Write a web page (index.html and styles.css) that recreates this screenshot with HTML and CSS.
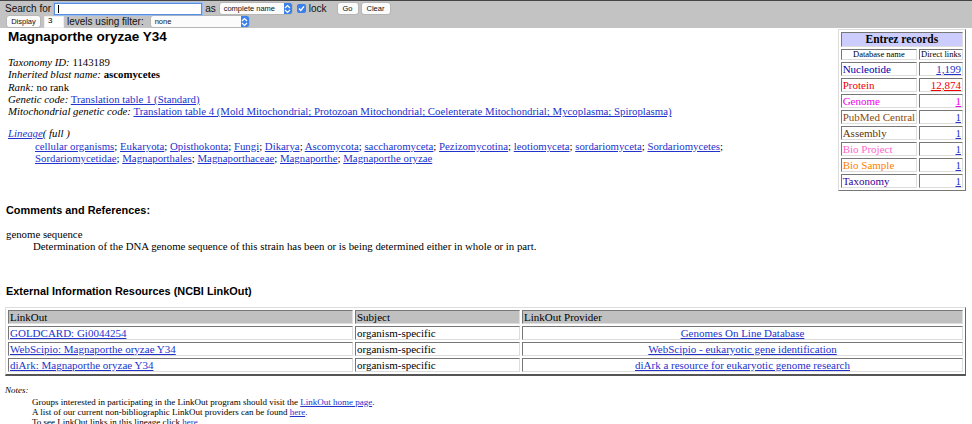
FILE: index.html
```html
<!DOCTYPE html>
<html>
<head>
<meta charset="utf-8">
<link rel="stylesheet" href="styles.css">
</head>
<body>
<div class="topbar">
  <div class="tb-row">
    <span class="tb-label">Search for</span>
    <span class="tb-input focus"><span class="caret"></span></span>
    <span class="tb-label">as</span>
    <span class="tb-select w1">complete name<span class="arrow"><svg width="7" height="10" viewBox="0 0 7 10"><path d="M1 4 L3.5 1.5 L6 4 M1 6 L3.5 8.5 L6 6" fill="none" stroke="#fff" stroke-width="1.2"/></svg></span></span>
    <span class="tb-check"><svg width="9" height="9" viewBox="0 0 9 9"><path d="M2 4.6 L3.8 6.5 L7 2.3" fill="none" stroke="#fff" stroke-width="1.4"/></svg></span>
    <span class="tb-label">lock</span>
    <span class="tb-btn go">Go</span>
    <span class="tb-btn">Clear</span>
  </div>
  <div class="tb-row">
    <span class="tb-btn disp">Display</span>
    <span class="tb-input small">3</span>
    <span class="tb-label">levels using filter:</span>
    <span class="tb-select w2">none<span class="arrow"><svg width="7" height="10" viewBox="0 0 7 10"><path d="M1 4 L3.5 1.5 L6 4 M1 6 L3.5 8.5 L6 6" fill="none" stroke="#fff" stroke-width="1.2"/></svg></span></span>
  </div>
</div>

<div class="upper">
  <div class="left">
    <h1 class="title">Magnaporthe oryzae Y34</h1>
    <div class="info">
      <div><i>Taxonomy ID:</i> 1143189</div>
      <div><i>Inherited blast name:</i> <b>ascomycetes</b></div>
      <div><i>Rank:</i> no rank</div>
      <div><i>Genetic code:</i> <a href="#">Translation table 1 (Standard)</a></div>
      <div><i>Mitochondrial genetic code:</i> <a href="#">Translation table 4 (Mold Mitochondrial; Protozoan Mitochondrial; Coelenterate Mitochondrial; Mycoplasma; Spiroplasma)</a></div>
    </div>
    <div class="lineage">
      <div><a href="#"><i>Lineage</i></a><i class="full">( full )</i></div>
      <div class="lin-links">
        <a href="#">cellular organisms</a>; <a href="#">Eukaryota</a>; <a href="#">Opisthokonta</a>; <a href="#">Fungi</a>; <a href="#">Dikarya</a>; <a href="#">Ascomycota</a>; <a href="#">saccharomyceta</a>; <a href="#">Pezizomycotina</a>; <a href="#">leotiomyceta</a>; <a href="#">sordariomyceta</a>; <a href="#">Sordariomycetes</a>;<br>
        <a href="#">Sordariomycetidae</a>; <a href="#">Magnaporthales</a>; <a href="#">Magnaporthaceae</a>; <a href="#">Magnaporthe</a>; <a href="#">Magnaporthe oryzae</a>
      </div>
    </div>
  </div>
  <table class="entrez">
    <tr><th colspan="2" class="ent-head">Entrez records</th></tr>
    <tr class="sub-row"><td class="sub">Database name</td><td class="sub">Direct links</td></tr>
    <tr><td class="c-nuc">Nucleotide</td><td class="num"><a href="#">1,199</a></td></tr>
    <tr><td class="c-pro">Protein</td><td class="num"><a href="#" class="red">12,874</a></td></tr>
    <tr><td class="c-gen">Genome</td><td class="num"><a href="#" class="mag">1</a></td></tr>
    <tr><td class="c-pmc">PubMed Central</td><td class="num"><a href="#">1</a></td></tr>
    <tr><td class="c-asm">Assembly</td><td class="num"><a href="#">1</a></td></tr>
    <tr><td class="c-bp">Bio Project</td><td class="num"><a href="#">1</a></td></tr>
    <tr><td class="c-bs">Bio Sample</td><td class="num"><a href="#">1</a></td></tr>
    <tr><td class="c-tax">Taxonomy</td><td class="num"><a href="#">1</a></td></tr>
  </table>
</div>

<h2 class="sect s1">Comments and References:</h2>
<div class="comments">
  <div>genome sequence</div>
  <div class="indent">Determination of the DNA genome sequence of this strain has been or is being determined either in whole or in part.</div>
</div>

<h2 class="sect s2">External Information Resources (NCBI LinkOut)</h2>
<table class="linkout">
  <tr class="lo-head"><td class="col1">LinkOut</td><td class="col2">Subject</td><td>LinkOut Provider</td></tr>
  <tr><td><a href="#">GOLDCARD: Gi0044254</a></td><td>organism-specific</td><td class="ctr"><a href="#">Genomes On Line Database</a></td></tr>
  <tr><td><a href="#">WebScipio: Magnaporthe oryzae Y34</a></td><td>organism-specific</td><td class="ctr"><a href="#">WebScipio - eukaryotic gene identification</a></td></tr>
  <tr><td><a href="#">diArk: Magnaporthe oryzae Y34</a></td><td>organism-specific</td><td class="ctr"><a href="#">diArk a resource for eukaryotic genome research</a></td></tr>
</table>

<div class="notes">
  <div class="notes-h"><i>Notes:</i></div>
  <div class="indent">Groups interested in participating in the LinkOut program should visit the <a href="#">LinkOut home page</a>.</div>
  <div class="indent">A list of our current non-bibliographic LinkOut providers can be found <a href="#">here</a>.</div>
  <div class="indent">To see LinkOut links in this lineage click <a href="#">here</a>.</div>
</div>
</body>
</html>
```

FILE: styles.css
```css
html, body {
  margin: 0;
  padding: 0;
  background: #fff;
}
body {
  font-family: "Liberation Serif", "Times New Roman", serif;
  font-size: 10.8px;
  line-height: 12.3px;
  color: #000;
  overflow: hidden;
  height: 424px;
}
a {
  color: #2233cc;
  text-decoration: underline;
}
.topbar {
  background: #c3c3c3;
  border-top: 1px solid #444;
  padding: 1px 0 0 5px;
  font-family: "Liberation Sans", Arial, sans-serif;
  box-sizing: border-box;
  height: 28px;
}
.tb-row {
  display: flex;
  align-items: center;
  height: 13px;
  gap: 3px;
}
.tb-row + .tb-row {
  padding-left: 2px;
}
.tb-label {
  font-size: 10px;
  color: #111;
  line-height: 12px;
}
.tb-input {
  background: #fff;
  height: 12px;
  box-sizing: border-box;
  border: 1px solid #d0d0d0;
  width: 148px;
  display: inline-flex;
  align-items: center;
  font-size: 8px;
  padding-left: 3px;
}
.tb-input.focus {
  border: 1px solid #5a8fe0;
  box-shadow: 0 0 0 1px #9bbcf0;
  margin-left: 0;
}
.caret {
  width: 1px;
  height: 8px;
  background: #000;
}
.tb-input.small {
  width: 20px;
  height: 12px;
  margin-left: 1px;
  border-color: #eee;
}
.tb-select {
  position: relative;
  background: #fbfbfb;
  border-radius: 2px;
  height: 11px;
  font-size: 7.5px;
  line-height: 11px;
  padding-left: 4px;
  box-sizing: border-box;
  box-shadow: 0 0 0 0.5px #aaa;
  color: #111;
}
.tb-select.w1 { width: 72px; margin-left: 1px; }
.tb-select.w2 { width: 98px; margin-left: 4px; }
.arrow {
  position: absolute;
  right: 0;
  top: 0;
  width: 8px;
  height: 11px;
  background: #3a80e8;
  border-radius: 0 2px 2px 0;
  display: flex;
  align-items: center;
  justify-content: center;
}
.tb-check {
  width: 9px;
  height: 9px;
  background: #3a80e8;
  border-radius: 2px;
  display: inline-flex;
  align-items: center;
  justify-content: center;
  margin-left: 2px;
}
.tb-btn {
  background: #fbfbfb;
  border-radius: 2px;
  box-shadow: 0 0 0 0.5px #aaa;
  height: 11px;
  font-size: 7.5px;
  line-height: 11px;
  text-align: center;
  color: #111;
  box-sizing: border-box;
}
.tb-btn.go { width: 20px; margin-left: 8px; }
.tb-btn.go + .tb-btn { width: 28px; margin-left: 1px; }
.tb-btn.disp { width: 33px; }

.upper {
  display: flex;
  justify-content: space-between;
  align-items: flex-start;
  padding: 0 6px 0 8px;
}
.left {
  flex: 1;
}
.title {
  font-family: "Liberation Sans", Arial, sans-serif;
  font-size: 13.5px;
  font-weight: bold;
  line-height: 14px;
  margin: 2px 0 0 0;
}
.info {
  margin-top: 12px;
}
.lineage {
  margin-top: 10px;
}
.full {
  font-weight: normal;
}
.lin-links {
  padding-left: 27px;
}
.entrez {
  margin-top: 1px;
  border-collapse: separate;
  border-spacing: 2px;
  border: 1px solid;
  border-color: #ddd #777 #777 #ddd;
  width: 126px;
  font-size: 11px;
}
.entrez td, .entrez th {
  border: 1px solid;
  border-color: #777 #ddd #ddd #777;
  padding: 0 1px;
  height: 12px;
  line-height: 12px;
  white-space: nowrap;
}
.entrez .ent-head {
  background: #ccccff;
  font-weight: bold;
  font-size: 11.5px;
  height: 13px;
  line-height: 13px;
}
.entrez .sub {
  font-size: 8.5px;
  text-align: center;
  height: 9px;
  line-height: 9px;
}
.num { text-align: right; width: 45px; }
.c-nuc { color: #0000aa; }
.c-pro { color: #ee0000; }
.c-gen { color: #ee00ee; }
.c-pmc { color: #8b4a10; }
.c-asm { color: #663300; }
.c-bp { color: #ff66cc; }
.c-bs { color: #ff8000; }
.c-tax { color: #330099; }
a.red { color: #ee0000; }
a.mag { color: #ee00ee; }

.sect {
  font-family: "Liberation Sans", Arial, sans-serif;
  font-size: 10.9px;
  font-weight: bold;
  line-height: 13px;
  margin: 0 0 0 6px;
}
.s1 { margin-top: 13px; }
.comments {
  margin: 11px 0 0 6px;
}
.indent {
  padding-left: 27px;
}
.s2 { margin-top: 32px; }
.linkout {
  margin: 9px 0 0 5px;
  width: 961px;
  border-collapse: separate;
  border-spacing: 2px;
  border: 1px solid;
  border-color: #ddd #666 #555 #ddd;
  border-bottom-width: 2px;
  font-size: 11px;
}
.linkout td {
  border: 1px solid;
  border-color: #777 #ddd #ddd #777;
  padding: 0 1px;
  height: 12px;
  line-height: 12px;
}
.lo-head td {
  background: #c0c0c0;
}
.col1 { width: 341px; }
.col2 { width: 161px; }
.ctr { text-align: center; }
.notes {
  margin: 9px 0 0 5px;
  font-size: 9px;
  line-height: 10.3px;
}
.notes-h {
  margin-bottom: 2px;
}
```
